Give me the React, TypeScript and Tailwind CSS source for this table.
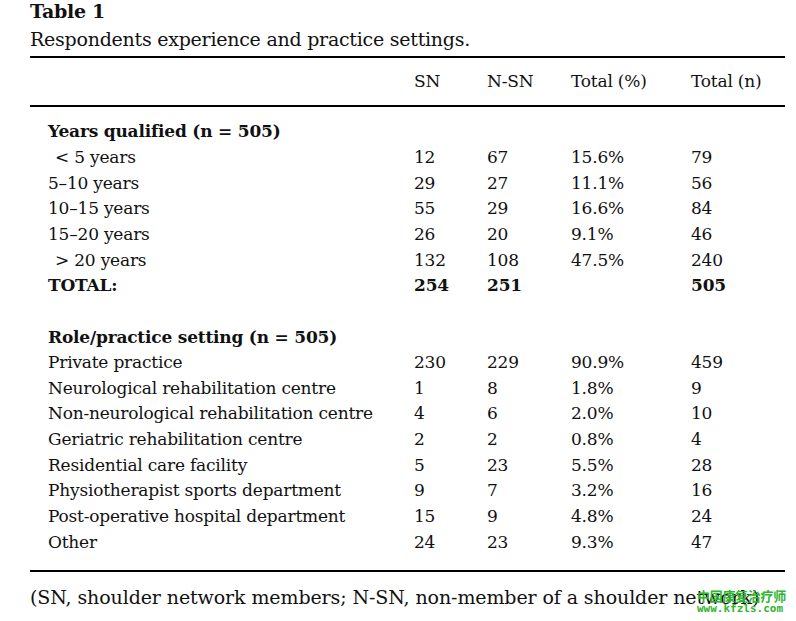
import React from "react";

type Row = { label: string; sn?: string; nsn?: string; pct?: string; n?: string; bold?: boolean; indent?: boolean; blank?: boolean };

const rows: Row[] = [
  { label: "Years qualified (n = 505)", bold: true },
  { label: "< 5 years", sn: "12", nsn: "67", pct: "15.6%", n: "79", indent: true },
  { label: "5–10 years", sn: "29", nsn: "27", pct: "11.1%", n: "56" },
  { label: "10–15 years", sn: "55", nsn: "29", pct: "16.6%", n: "84" },
  { label: "15–20 years", sn: "26", nsn: "20", pct: "9.1%", n: "46" },
  { label: "> 20 years", sn: "132", nsn: "108", pct: "47.5%", n: "240", indent: true },
  { label: "TOTAL:", sn: "254", nsn: "251", pct: "", n: "505", bold: true },
  { label: "", blank: true },
  { label: "Role/practice setting (n = 505)", bold: true },
  { label: "Private practice", sn: "230", nsn: "229", pct: "90.9%", n: "459" },
  { label: "Neurological rehabilitation centre", sn: "1", nsn: "8", pct: "1.8%", n: "9" },
  { label: "Non-neurological rehabilitation centre", sn: "4", nsn: "6", pct: "2.0%", n: "10" },
  { label: "Geriatric rehabilitation centre", sn: "2", nsn: "2", pct: "0.8%", n: "4" },
  { label: "Residential care facility", sn: "5", nsn: "23", pct: "5.5%", n: "28" },
  { label: "Physiotherapist sports department", sn: "9", nsn: "7", pct: "3.2%", n: "16" },
  { label: "Post-operative hospital department", sn: "15", nsn: "9", pct: "4.8%", n: "24" },
  { label: "Other", sn: "24", nsn: "23", pct: "9.3%", n: "47" },
];

export default function App() {
  return (
    <div className="relative w-[796px] h-[621px] bg-white text-[#111] font-['DejaVu_Serif',serif] overflow-hidden">
      <div className="pl-[30px] pr-[11px]">
        <div className="pt-[0px] text-[19px] font-bold leading-[22px] tracking-[-0.3px]">Table 1</div>
        <div className="mt-[5px] text-[19px] leading-[24px] tracking-[-0.25px]">Respondents experience and practice settings.</div>
        <div className="mt-[5px] h-[2px] bg-black" />
        <div className="grid grid-cols-[384px_73px_84px_120px_1fr] text-[17px] leading-[25.67px] pt-[11px] pb-[10px] tracking-[-0.2px]">
          <div />
          <div>SN</div>
          <div>N-SN</div>
          <div>Total (%)</div>
          <div>Total (n)</div>
        </div>
        <div className="h-[2px] bg-black" />
        <div className="pt-[12.6px] pb-[15px] text-[17px] leading-[25.67px] tracking-[-0.2px]">
          {rows.map((r, i) => (
            <div key={i} className={"grid grid-cols-[384px_73px_84px_120px_1fr] h-[25.67px] " + (r.bold ? "font-bold" : "")}>
              <div className={r.indent ? "pl-[25px]" : "pl-[18px]"}>{r.label}</div>
              <div>{r.sn}</div>
              <div>{r.nsn}</div>
              <div>{r.pct}</div>
              <div>{r.n}</div>
            </div>
          ))}
        </div>
        <div className="h-[2px] bg-black" />
        <div className="mt-[13px] text-[19px] leading-[24px] tracking-[-0.1px] whitespace-nowrap">
          (SN, shoulder network members; N-SN, non-member of a shoulder network)
        </div>
      </div>
      <div className="absolute left-[697px] top-[588px] flex flex-col items-start">
        <div className="text-[13px] leading-[15px] font-bold text-[#2fb52f] font-['Noto_Sans_CJK_SC',sans-serif] tracking-[-0.3px]">中国康复治疗师</div>
        <div className="text-[11px] leading-[12px] font-bold text-[#2fb52f] font-['DejaVu_Sans_Mono',monospace] tracking-[0px]">www.kfzls.com</div>
      </div>
    </div>
  );
}
